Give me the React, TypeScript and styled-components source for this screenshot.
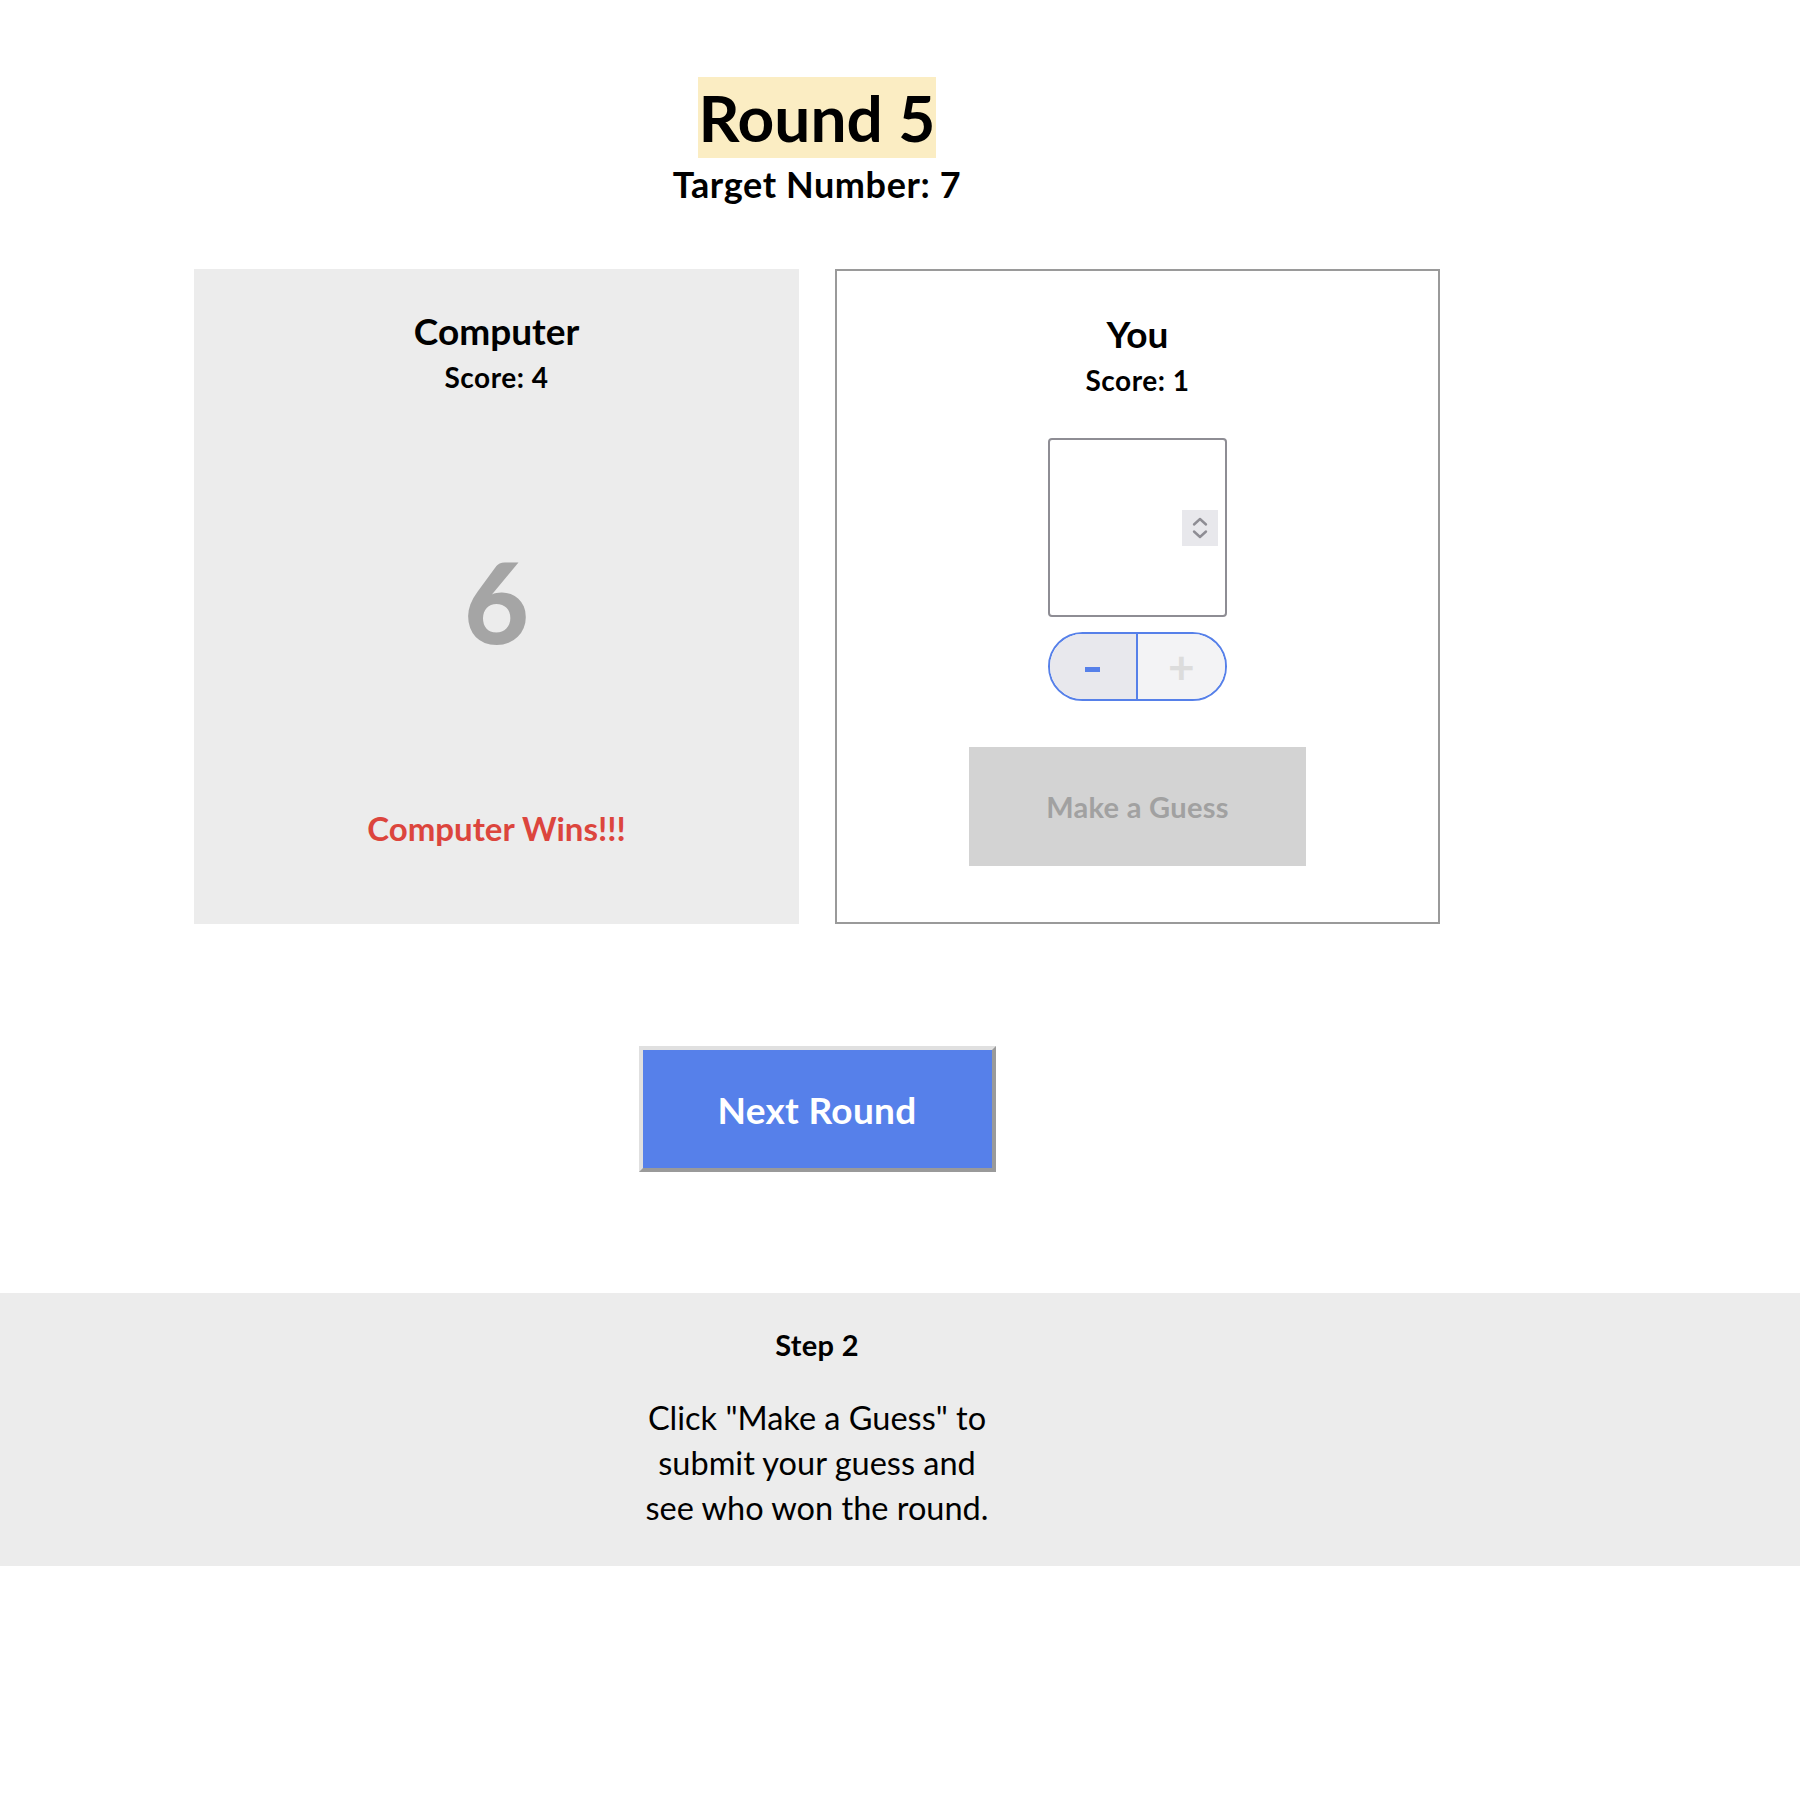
import React from 'react'
import styled, { createGlobalStyle } from 'styled-components'

const GlobalStyle = createGlobalStyle`
  html, body {
    margin: 0;
    padding: 0;
    background: #fff;
  }
  body {
    font-family: Lato, "Open Sans", sans-serif;
    color: #000;
  }
  * {
    box-sizing: border-box;
  }
`

const Page = styled.div`
  width: 1800px;
  min-height: 1800px;
`

const Main = styled.main`
  width: 1634px;
  padding-top: 77px;
  display: flex;
  flex-direction: column;
  align-items: center;
`

const RoundTitle = styled.h1`
  margin: 0;
  padding: 0 1px;
  height: 81px;
  line-height: 81px;
  font-size: 64px;
  font-weight: 700;
  background: #fbedc3;
`

const Target = styled.h2`
  margin: 6px 0 0;
  line-height: 40px;
  font-size: 36px;
  font-weight: 700;
  letter-spacing: 0.6px;
`

const Board = styled.section`
  margin-top: 65px;
  display: grid;
  grid-template-columns: 605px 605px;
  gap: 36px;
`

const Panel = styled.div<{ $outlined?: boolean }>`
  height: 655px;
  display: flex;
  flex-direction: column;
  align-items: center;
  padding-top: ${p => (p.$outlined ? 41 : 40)}px;
  background: ${p => (p.$outlined ? '#fff' : '#ececec')};
  border: ${p => (p.$outlined ? '2px solid #9a9a9a' : 'none')};
`

const PlayerName = styled.h3`
  margin: 0;
  line-height: 44px;
  font-size: 37px;
  font-weight: 700;
`

const Score = styled.div`
  margin-top: 8px;
  line-height: 32px;
  font-size: 28px;
  font-weight: 700;
  letter-spacing: 0.5px;
`

const Guess = styled.div`
  margin-top: 148px;
  line-height: 120px;
  font-size: 112px;
  font-weight: 900;
  color: #a5a5a5;
`

const Result = styled.div`
  margin-top: 147px;
  line-height: 40px;
  font-size: 33px;
  font-weight: 700;
  color: #dc453d;
`

const NumberField = styled.label`
  margin-top: 42px;
  width: 179px;
  height: 179px;
  display: flex;
  align-items: center;
  padding-right: 7px;
  border: 2px solid #8e8d94;
  border-radius: 4px;
  background: #fff;
`

const NumberInput = styled.input`
  flex: 1;
  min-width: 0;
  height: 100%;
  border: none;
  outline: none;
  background: transparent;
  font: inherit;
  font-size: 32px;
  text-align: center;
  -moz-appearance: textfield;
  &::-webkit-outer-spin-button,
  &::-webkit-inner-spin-button {
    -webkit-appearance: none;
    margin: 0;
  }
`

const Spinner = styled.span`
  width: 36px;
  height: 36px;
  display: flex;
  background: #e8e8ec;
`

const Stepper = styled.div`
  margin-top: 15px;
  width: 179px;
  height: 69px;
  display: grid;
  grid-template-columns: 1fr 1fr;
  border: 2px solid #5680e9;
  border-radius: 35px;
  overflow: hidden;
`

const StepButton = styled.button<{ $side: 'minus' | 'plus' }>`
  border: none;
  padding: 0;
  margin: 0;
  font-family: inherit;
  font-weight: 700;
  display: flex;
  align-items: center;
  justify-content: center;
  background: ${p => (p.$side === 'minus' ? '#e8e8ed' : '#f3f3f5')};
  color: ${p => (p.$side === 'minus' ? '#5680e9' : '#dcdcdc')};
  font-size: 46px;
  border-right: ${p => (p.$side === 'minus' ? '2px solid #5680e9' : 'none')};
`

const MinusBar = styled.span`
  width: 15px;
  height: 5px;
  margin-top: 5px;
  background: #5680e9;
`

const GuessButton = styled.button`
  margin-top: 46px;
  width: 337px;
  height: 119px;
  border: none;
  background: #d3d3d3;
  color: #a1a1a1;
  font-family: inherit;
  font-size: 29px;
  font-weight: 700;
  letter-spacing: 0.3px;
`

const NextButton = styled.button`
  margin-top: 122px;
  width: 357px;
  height: 126px;
  border: 4px solid;
  border-color: #e0e0e0 #9a9a9a #9a9a9a #e0e0e0;
  background: #5680ea;
  color: #fff;
  font-family: inherit;
  font-size: 37px;
  font-weight: 700;
  letter-spacing: 0.3px;
`

const Footer = styled.footer`
  margin-top: 121px;
  width: 1800px;
  height: 273px;
  background: #ececec;
`

const FooterInner = styled.div`
  width: 1634px;
  padding-top: 35px;
  display: flex;
  flex-direction: column;
  align-items: center;
  text-align: center;
`

const StepTitle = styled.h4`
  margin: 0;
  line-height: 34px;
  font-size: 29px;
  font-weight: 700;
  letter-spacing: 0.3px;
`

const StepText = styled.p`
  margin: 33px 0 0;
  max-width: 350px;
  line-height: 45px;
  font-size: 32.5px;
  font-weight: 400;
`

const App: React.FC = () => {
  return (
    <Page>
      <GlobalStyle />
      <Main>
        <RoundTitle>Round 5</RoundTitle>
        <Target>Target Number: 7</Target>

        <Board>
          <Panel>
            <PlayerName>Computer</PlayerName>
            <Score>Score: 4</Score>
            <Guess>6</Guess>
            <Result>Computer Wins!!!</Result>
          </Panel>

          <Panel $outlined>
            <PlayerName>You</PlayerName>
            <Score>Score: 1</Score>
            <NumberField>
              <NumberInput type="number" aria-label="Your guess" />
              <Spinner>
                <svg width="36" height="36" viewBox="0 0 36 36" fill="none">
                  <path d="M12 14.5 L18 9 L24 14.5" stroke="#8e8d94" strokeWidth="2.4" strokeLinecap="round" strokeLinejoin="round" />
                  <path d="M12 21.5 L18 27 L24 21.5" stroke="#8e8d94" strokeWidth="2.4" strokeLinecap="round" strokeLinejoin="round" />
                </svg>
              </Spinner>
            </NumberField>
            <Stepper>
              <StepButton $side="minus" aria-label="Decrease">
                <MinusBar />
              </StepButton>
              <StepButton $side="plus" aria-label="Increase">+</StepButton>
            </Stepper>
            <GuessButton disabled>Make a Guess</GuessButton>
          </Panel>
        </Board>

        <NextButton>Next Round</NextButton>
      </Main>

      <Footer>
        <FooterInner>
          <StepTitle>Step 2</StepTitle>
          <StepText>Click "Make a Guess" to submit your guess and see who won the round.</StepText>
        </FooterInner>
      </Footer>
    </Page>
  )
}

export default App
